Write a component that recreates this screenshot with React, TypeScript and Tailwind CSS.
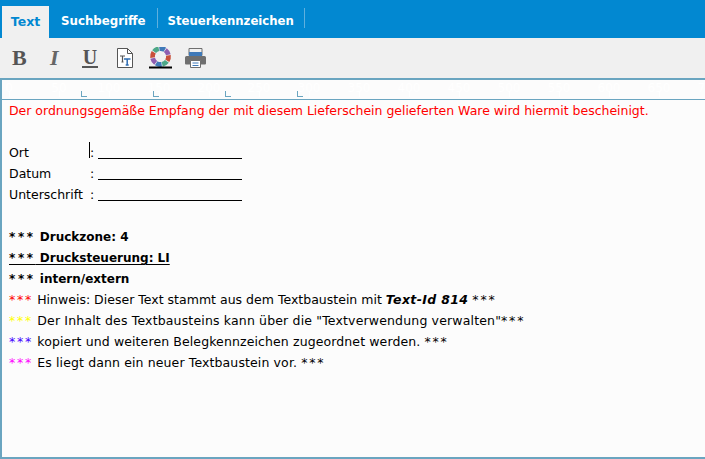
import { Fragment } from "react";
import type { ReactNode } from "react";

const font = "font-['DejaVu_Sans',Verdana,sans-serif]";

const ticks = [7, 57, 107, 157, 207, 257, 307, 357, 407, 457, 507, 557, 607, 657, 707];
const stops = [79, 151, 223, 295];
const wheel = ["#3f79b8", "#8e5db0", "#c9503a", "#4da887", "#3f79b8", "#8e5db0", "#c9503a", "#4da887"];

const Tabs = () => (
  <div className="flex h-[38px] items-end bg-[#0288d1] pl-[2px]">
    <div className="flex h-[32px] w-[47px] items-center justify-center bg-[#f0f0f0] text-[12.500px] font-bold text-[#0288d1]">
      Text
    </div>
    <div className="w-px" />
    <div className="flex h-[32px] items-center px-[11px] text-[11.800px] font-bold text-white">Suchbegriffe</div>
    <div className="mb-[10px] h-[20px] w-px bg-[#5fb0de]" />
    <div className="flex h-[32px] items-center px-[10px] text-[11.700px] font-bold text-white">Steuerkennzeichen</div>
    <div className="mb-[10px] h-[20px] w-px bg-[#5fb0de]" />
  </div>
);

const Toolbar = () => (
  <div className="flex h-[40px] items-center bg-[#f0f0f0] pl-[12px] font-['Liberation_Serif',serif] text-[#555]">
    <div className="w-[38px] text-[22px] font-bold leading-[22px]">B</div>
    <div className="w-[32px] text-[22px] font-bold italic leading-[22px] text-[#666]">I</div>
    <div className="w-[35px]">
      <div className="w-[16px] border-b-2 border-[#555] text-center text-[20px] font-bold leading-[18px]">U</div>
    </div>
    <svg width="16" height="20" viewBox="0 0 16 20" className="mr-[16px]">
      <path d="M.5 .5h10l5 5v14h-15z" fill="#fff" stroke="#555" />
      <path d="M10.500 .5v5h5" fill="none" stroke="#555" />
      <path d="M3 8h5M5.500 8v6M4.500 14h2" stroke="#555" strokeWidth="1.200" fill="none" />
      <path d="M7 11h6.500M10.200 11v6M8.700 17h3" stroke="#2f6db3" strokeWidth="1.500" fill="none" />
    </svg>
    <svg width="23" height="22" viewBox="0 0 23 22" className="mr-[13px]">
      {wheel.map((c, i) => (
        <path
          key={i}
          d="M11.500 1.500a8 8 0 0 1 5.200 1.900"
          fill="none"
          stroke={c}
          strokeWidth="4.800"
          transform={`rotate(${i * 45 - 8} 11.500 9.500)`}
        />
      ))}
      <rect x="0" y="19.500" width="23" height="2" fill="#000" />
    </svg>
    <svg width="21" height="20" viewBox="0 0 21 20">
      <path d="M4 .5h13v7h-13z" fill="#f0f0f0" stroke="#6f6f6f" />
      <path d="M4 4h13v4h-13z" fill="#3f79b8" />
      <path d="M1.500 8h18a1.500 1.500 0 0 1 1.500 1.500v6a1 1 0 0 1-1 1h-19a1 1 0 0 1-1-1v-6a1.500 1.500 0 0 1 1.500-1.500z" fill="#6f6f6f" />
      <path d="M5.500 12.500h10v7h-10z" fill="#fff" stroke="#6f6f6f" />
      <path d="M7.500 15h6M7.500 17.500h6" stroke="#3f79b8" />
    </svg>
  </div>
);

const Ruler = () => (
  <div className="relative h-[20px] shrink-0 overflow-hidden border-b border-[#6aa5c0]">
    {ticks.map((x, i) => (
      <Fragment key={x}>
        <span
          className="absolute top-0 w-[40px] text-center text-[12px] leading-[17px] text-white"
          style={{ left: x - 20 }}
        >
          {i * 50}
        </span>
        <span className="absolute top-[11px] h-[6px] w-px bg-white" style={{ left: x }} />
      </Fragment>
    ))}
    {stops.map((x) => (
      <span
        key={x}
        className="absolute top-[11px] h-[6px] w-[6px] border-b border-l border-[#6aa5c0]"
        style={{ left: x }}
      />
    ))}
  </div>
);

const SignLine = ({ label, cursor }: { label: string; cursor?: boolean }) => (
  <div className="flex h-[21px] items-center">
    <span className="w-[81px]">{label}</span>
    <span className="relative">
      {cursor && <span className="absolute left-[-1px] top-[0px] h-[16px] w-px bg-black" />}:
    </span>
    <span className="ml-[4px] mt-[11px] h-px w-[144px] bg-black" />
  </div>
);

const Stars = ({ color }: { color?: string }) => (
  <span className="tracking-[1.800px]" style={{ color }}>
    ***
  </span>
);

const Line = ({ color, spacing, children }: { color: string; spacing: string; children: ReactNode }) => (
  <div className={spacing}>
    <Stars color={color} /> {children}
  </div>
);

export default function App() {
  return (
    <div className={`${font} flex h-[459px] w-[705px] flex-col overflow-hidden bg-[#fcfcfc]`}>
      <Tabs />
      <Toolbar />
      <div className="flex min-h-0 flex-1 flex-col border-y-2 border-l-2 border-[#6aa5c0]">
        <Ruler />
        <div className="whitespace-nowrap px-[7px] text-[12.500px] leading-[21px] text-black">
          <div className="text-[#ff0000] tracking-[-0.020px]">
            Der ordnungsgemäße Empfang der mit diesem Lieferschein gelieferten Ware wird hiermit bescheinigt.
          </div>
          <div className="h-[21px]" />
          <SignLine label="Ort" cursor />
          <SignLine label="Datum" />
          <SignLine label="Unterschrift" />
          <div className="h-[21px]" />
          <div className="h-[21px] pt-px text-[12px] font-bold">
            <span className="tracking-[2.600px]">***</span> Druckzone: 4
          </div>
          <div className="h-[21px] pt-px text-[12px] font-bold">
            <span className="underline decoration-1 underline-offset-2">
              <span className="tracking-[2.600px]">***</span> Drucksteuerung: LI
            </span>
          </div>
          <div className="h-[21px] pt-px text-[12px] font-bold">
            <span className="tracking-[2.600px]">***</span> intern/extern
          </div>
          <Line color="#ff0000" spacing="tracking-[0.010px]">
            Hinweis: Dieser Text stammt aus dem Textbaustein mit <b className="tracking-[0.350px]"><i>Text-Id 814</i></b> <Stars />
          </Line>
          <Line color="#ffff00" spacing="tracking-[0.160px]">
            Der Inhalt des Textbausteins kann über die "Textverwendung verwalten"<Stars />
          </Line>
          <Line color="#4400ff" spacing="tracking-[0.110px]">
            kopiert und weiteren Belegkennzeichen zugeordnet werden. <Stars />
          </Line>
          <Line color="#ff00ff" spacing="tracking-[0.120px]">
            Es liegt dann ein neuer Textbaustein vor. <Stars />
          </Line>
        </div>
      </div>
    </div>
  );
}
